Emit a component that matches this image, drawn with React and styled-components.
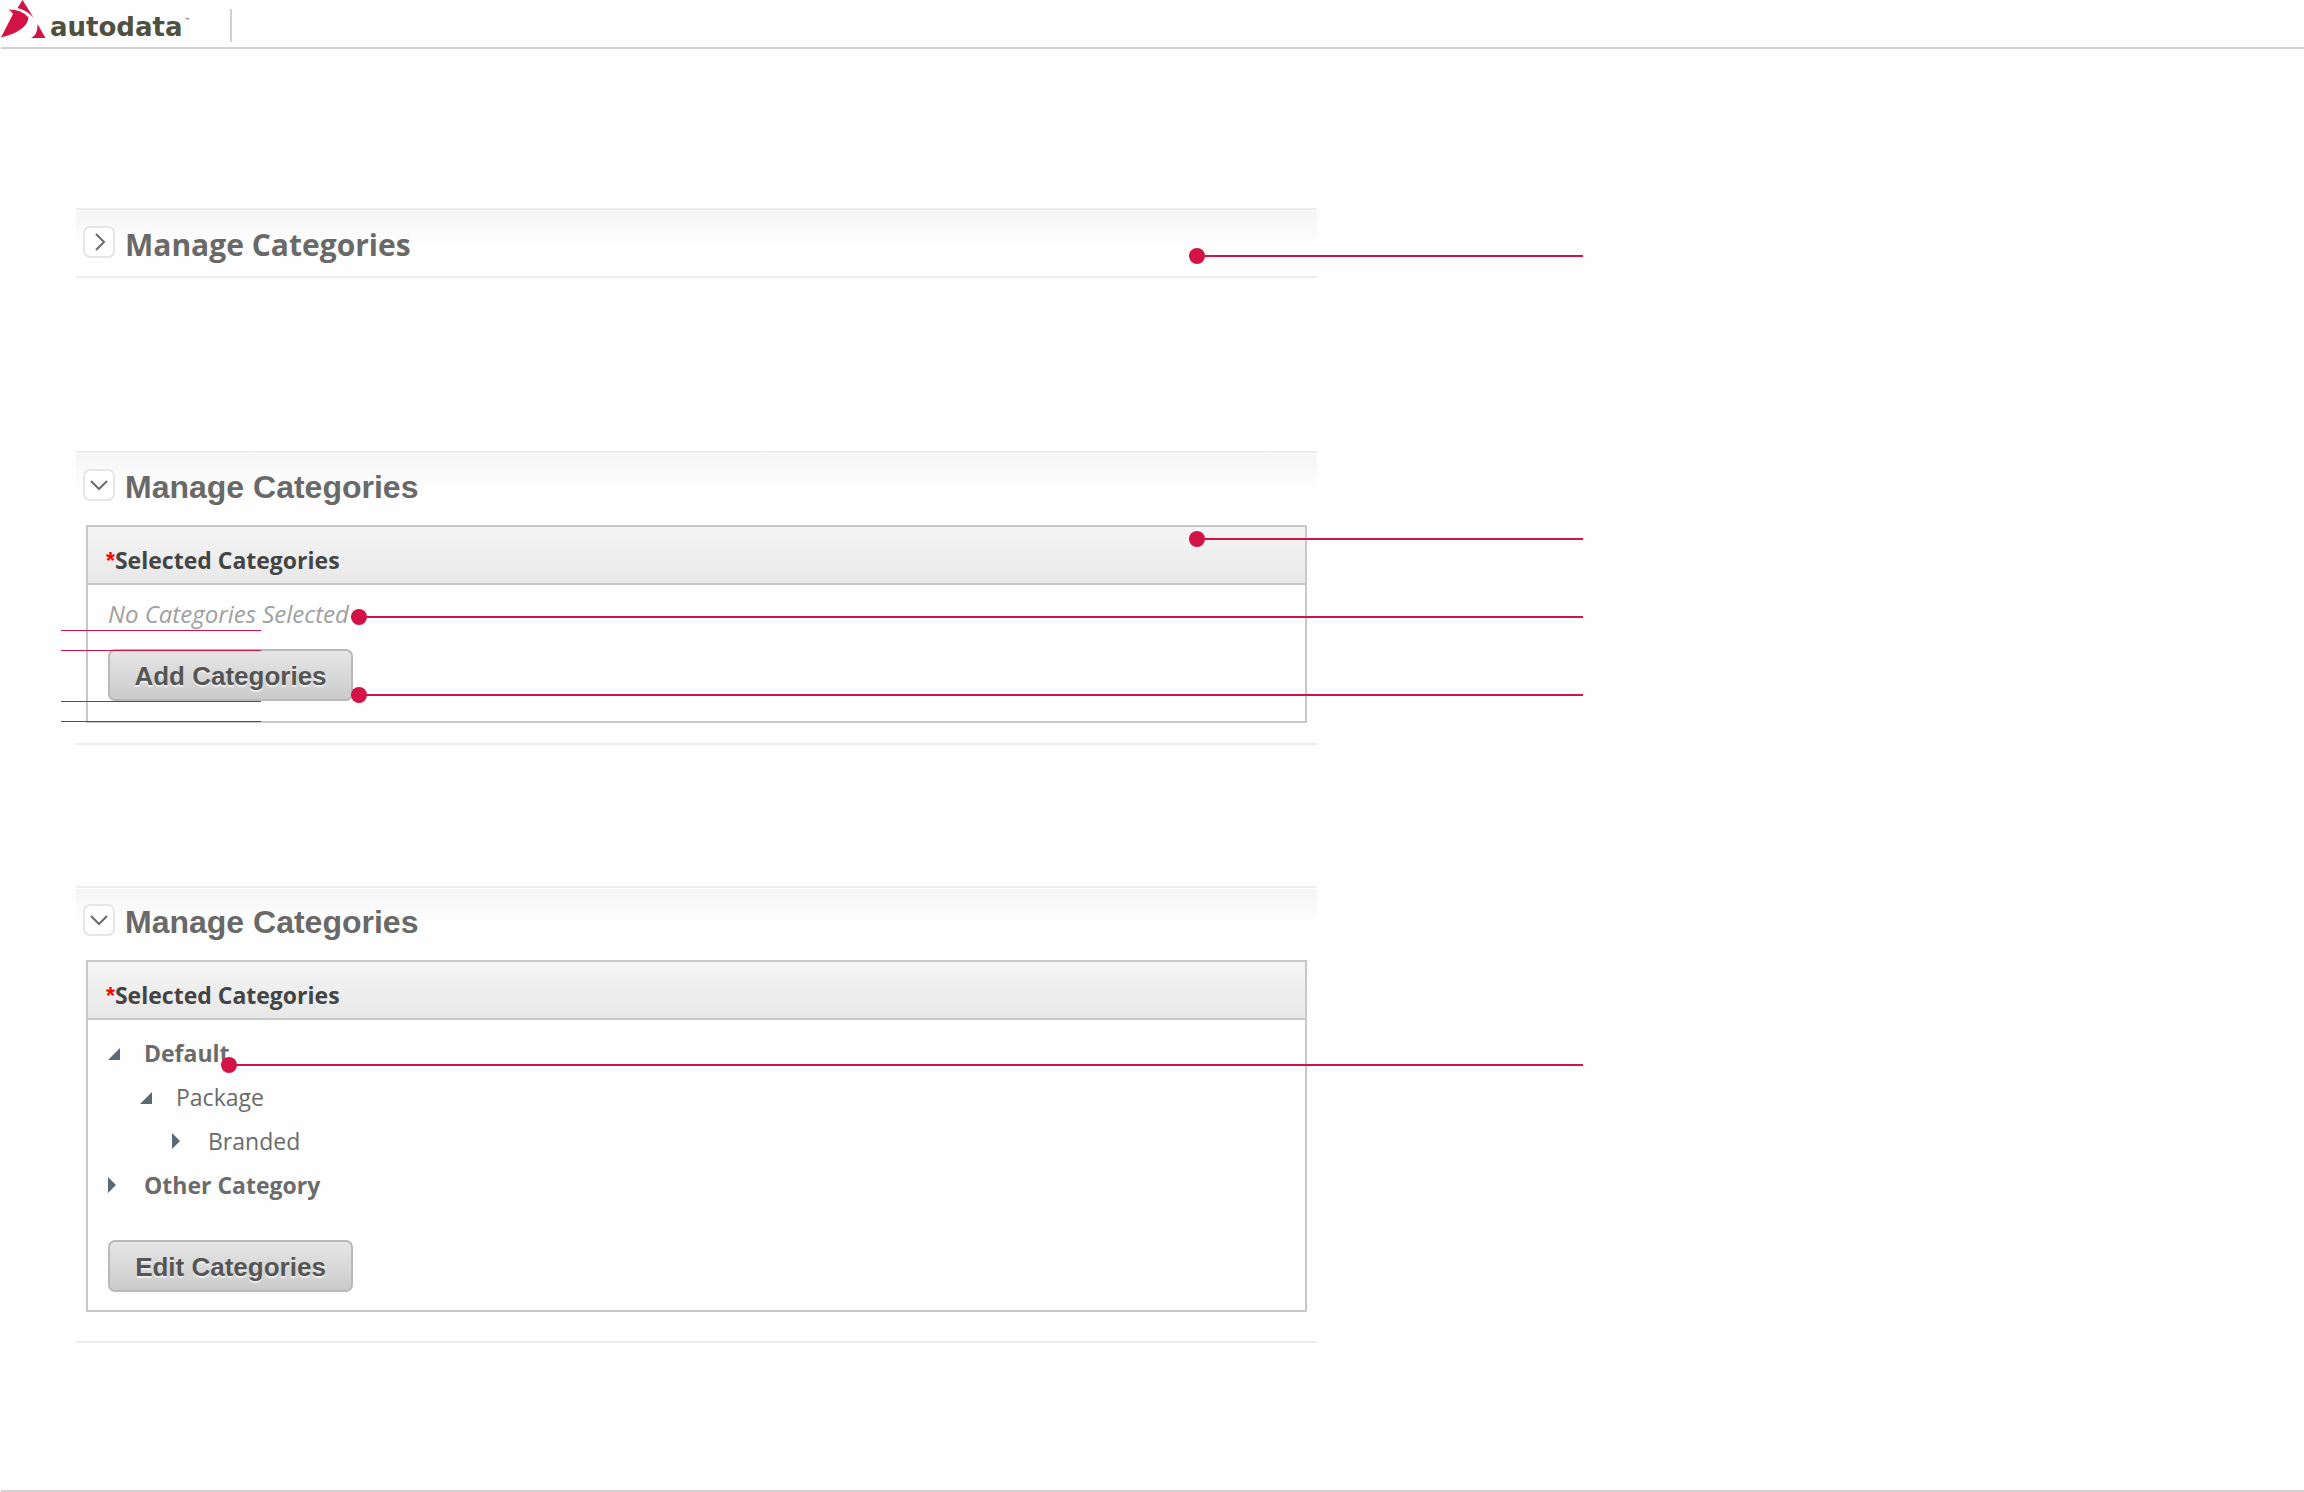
import React from 'react';
import styled, { createGlobalStyle } from 'styled-components';

const GlobalStyle = createGlobalStyle`
  * {
    box-sizing: border-box;
  }

  body {
    margin: 0;
    background: #fefefe;
    font-family: 'Open Sans', 'Noto Sans', sans-serif;
  }
`;

const Page = styled.div`
  display: flex;
  flex-direction: column;
  min-height: 100vh;
  overflow-x: hidden;
`;

const TopBar = styled.header`
  display: flex;
  align-items: flex-start;
  height: 49px;
  margin-left: 1px;
  border-bottom: 2px solid #d5d1d2;
`;

const Brand = styled.a`
  display: flex;
  color: #4f5040;
  text-decoration: none;
`;

const BrandMark = styled.svg`
  width: 46px;
  height: 40px;
`;

const BrandName = styled.span`
  margin-left: 3px;
  font-family: 'DejaVu Sans', sans-serif;
  font-weight: 700;
  font-size: 26px;
  line-height: 54px;
  height: 42px;
`;

const Trademark = styled.span`
  margin: 16px 0 0 2px;
  font-family: 'Liberation Sans', sans-serif;
  font-size: 5px;
  line-height: 6px;
  color: #4f5040;
`;

const BarDivider = styled.span`
  width: 2px;
  height: 33px;
  margin: 9px 0 0 41px;
  background: #d5d1d2;
`;

const Content = styled.main`
  padding: 159px 76px 0;
`;

const Panel = styled.section`
  position: relative;
  max-width: 1241px;
  margin-bottom: ${({ $after }) => $after || 0}px;
  padding-top: 1px;
  padding-bottom: ${({ $bottom }) => $bottom || 0}px;
  border-top: 2px solid #ededed;
  border-bottom: 2px solid #ededed;
`;

const PanelHeading = styled.div`
  display: flex;
  align-items: flex-start;
  gap: 10px;
  height: 65px;
  padding: 15px 7px 0;
  background: linear-gradient(#f5f5f5, #fefefe 34px);
`;

const Toggle = styled.button`
  display: flex;
  align-items: center;
  justify-content: center;
  width: 32px;
  height: 32px;
  padding: 0;
  border: 2px solid #e6e6e6;
  border-radius: 7px;
  background: #fff;
`;

const Title = styled.h2`
  margin: 0;
  font-family: ${({ $arial }) => ($arial ? "'Liberation Sans', Arial, sans-serif" : 'inherit')};
  font-size: ${({ $arial }) => ($arial ? 32 : 30)}px;
  font-weight: 700;
  line-height: ${({ $arial }) => ($arial ? 36 : 38)}px;
  color: #696969;
`;

const Box = styled.div`
  margin: 6px 10px 0;
  border: 2px solid #c8c8c8;
`;

const BoxHeader = styled.div`
  display: flex;
  height: 58px;
  padding: 16px 18px 0;
  border-bottom: 2px solid #c8c8c8;
  background: linear-gradient(#f5f5f5, #e8e8e8);
`;

const Label = styled.h3`
  margin: 0;
  font-size: 23px;
  font-weight: 700;
  line-height: 34px;
  color: #444;
`;

const Required = styled.span`
  font-family: 'Liberation Sans', Arial, sans-serif;
  color: #f00;
`;

const BoxBody = styled.div`
  display: flex;
  flex-direction: column;
  align-items: flex-start;
  padding: ${({ $tree }) => ($tree ? '11px 20px 18px' : '12px 20px 20px')};
`;

const EmptyNote = styled.p`
  margin: 0 0 18px;
  font-size: 24px;
  font-style: italic;
  line-height: 34px;
  color: #a0a0a0;
`;

const ActionButton = styled.button`
  min-width: 245px;
  height: 52px;
  padding: 2px 20px 0;
  border: 2px solid #b9b9b9;
  border-radius: 7px;
  background: linear-gradient(#e6e6e6, #cbcbcb);
  font-family: 'Liberation Sans', Arial, sans-serif;
  font-size: 26px;
  font-weight: 700;
  color: #555;
  text-shadow: 0 2px 1px #eee;
`;

const Tree = styled.ul`
  margin: 0 0 33px;
  padding: 0;
  list-style: none;
`;

const TreeRow = styled.li`
  display: flex;
  align-items: center;
  height: 44px;
  padding-left: ${({ $level }) => $level * 32}px;
  font-size: 23px;
  font-weight: ${({ $level }) => ($level ? 400 : 700)};
  color: #6b6b6b;
`;

const Arrow = styled.svg`
  width: 12px;
  height: 16px;
  margin-right: 24px;
`;

// red annotation: a dot on the part and a line out to the margin
const Callout = styled.span`
  position: absolute;
  top: ${({ $top }) => $top}px;
  left: ${({ $left }) => $left}px;
  right: -266px;
  height: 2px;
  background: #d31245;

  &::before {
    content: '';
    position: absolute;
    top: -7px;
    left: 0;
    width: 16px;
    height: 16px;
    border-radius: 50%;
    background: #d31245;
  }
`;

const Guide = styled.span`
  position: absolute;
  top: ${({ $top }) => $top}px;
  left: -15px;
  width: 200px;
  height: 1px;
  background: #d31245;
`;

const BottomRule = styled.footer`
  margin: auto 0 0 1px;
  border-top: 2px solid #d5d1d2;
`;

const tree = [
  { name: 'Default', level: 0, open: true },
  { name: 'Package', level: 1, open: true },
  { name: 'Branded', level: 2, open: false },
  { name: 'Other Category', level: 0, open: false },
];

function Heading({ open }) {
  return (
    <PanelHeading>
      <Toggle type="button" aria-expanded={open} aria-label="Toggle Manage Categories">
        <svg width="18" height="18" viewBox="0 0 18 18" fill="none" stroke="#6b6b6b" strokeWidth="2">
          <path d={open ? 'M1 5L9 13L17 5' : 'M6 1L14 9L6 17'} />
        </svg>
      </Toggle>
      <Title $arial={open}>Manage Categories</Title>
    </PanelHeading>
  );
}

function SelectedHeader() {
  return (
    <BoxHeader>
      <Label>
        <Required>*</Required>Selected Categories
      </Label>
    </BoxHeader>
  );
}

function App() {
  return (
    <Page>
      <GlobalStyle />
      <TopBar>
        <Brand href="#">
          <BrandMark viewBox="1 0 46 40" fill="#d31245" aria-hidden="true">
            <path d="M22.5 0L33.5 17.5Q27 10.5 17.5 8Z" />
            <path d="M8.5 9.5Q22 9.5 28.5 17.5Q27 31 1 37.5L13 14Q11.5 11 8.5 9.5Z" />
            <path d="M37.5 24L45.5 38H31Q38 35 37.5 24Z" />
          </BrandMark>
          <BrandName>autodata</BrandName>
          <Trademark>™</Trademark>
        </Brand>
        <BarDivider />
      </TopBar>

      <Content>
        <Panel $after={173}>
          <Heading open={false} />
          <Callout $top={45} $left={1113} />
        </Panel>

        <Panel $after={141} $bottom={20}>
          <Heading open />
          <Box>
            <SelectedHeader />
            <BoxBody>
              <EmptyNote>No Categories Selected</EmptyNote>
              <ActionButton type="button">Add Categories</ActionButton>
            </BoxBody>
          </Box>
          <Guide $top={177} />
          <Guide $top={197} />
          <Guide $top={248} />
          <Guide $top={268} />
          <Callout $top={85} $left={1113} />
          <Callout $top={163} $left={275} />
          <Callout $top={241} $left={275} />
        </Panel>

        <Panel $bottom={29}>
          <Heading open />
          <Box>
            <SelectedHeader />
            <BoxBody $tree>
              <Tree>
                {tree.map(({ name, level, open }) => (
                  <TreeRow key={name} $level={level}>
                    <Arrow viewBox="0 0 12 16" fill="#5b6977" aria-hidden="true">
                      <path d={open ? 'M12 3V15H0Z' : 'M0 0L8 8L0 16Z'} />
                    </Arrow>
                    {name}
                  </TreeRow>
                ))}
              </Tree>
              <ActionButton type="button">Edit Categories</ActionButton>
            </BoxBody>
          </Box>
          <Callout $top={176} $left={145} />
        </Panel>
      </Content>

      <BottomRule />
    </Page>
  );
}

export default App;
